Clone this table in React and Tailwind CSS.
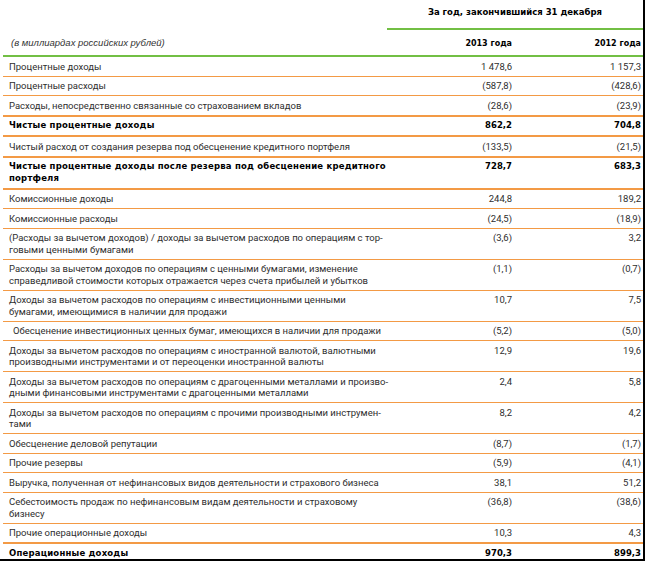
import React from "react";

const rows = [
  { l: ["Процентные доходы"], a: "1 478,6", b: "1 157,3" },
  { l: ["Процентные расходы"], a: "(587,8)", b: "(428,6)" },
  { l: ["Расходы, непосредственно связанные со страхованием вкладов"], a: "(28,6)", b: "(23,9)", t: true },
  { l: ["Чистые процентные доходы"], a: "862,2", b: "704,8", bold: true, t: true },
  { l: ["Чистый расход от создания резерва под обесценение кредитного портфеля"], a: "(133,5)", b: "(21,5)", t: true },
  { l: ["Чистые процентные доходы после резерва под обесценение кредитного", "портфеля"], a: "728,7", b: "683,3", bold: true, t: true },
  { l: ["Комиссионные доходы"], a: "244,8", b: "189,2" },
  { l: ["Комиссионные расходы"], a: "(24,5)", b: "(18,9)" },
  { l: ["(Расходы за вычетом доходов) / доходы за вычетом расходов по операциям с тор-", "говыми ценными бумагами"], a: "(3,6)", b: "3,2" },
  { l: ["Расходы за вычетом доходов по операциям с ценными бумагами, изменение", "справедливой стоимости которых отражается через счета прибылей и убытков"], a: "(1,1)", b: "(0,7)" },
  { l: ["Доходы за вычетом расходов по операциям с инвестиционными ценными", "бумагами, имеющимися в наличии для продажи"], a: "10,7", b: "7,5" },
  { l: ["Обесценение инвестиционных ценных бумаг, имеющихся в наличии для продажи"], a: "(5,2)", b: "(5,0)", ind: true },
  { l: ["Доходы за вычетом расходов по операциям с иностранной валютой, валютными", "производными инструментами и от переоценки иностранной валюты"], a: "12,9", b: "19,6" },
  { l: ["Доходы за вычетом расходов по операциям с драгоценными металлами и произво-", "дными финансовыми инструментами с драгоценными металлами"], a: "2,4", b: "5,8" },
  { l: ["Доходы за вычетом расходов по операциям с прочими производными инструмен-", "тами"], a: "8,2", b: "4,2" },
  { l: ["Обесценение деловой репутации"], a: "(8,7)", b: "(1,7)" },
  { l: ["Прочие резервы"], a: "(5,9)", b: "(4,1)" },
  { l: ["Выручка, полученная от нефинансовых видов деятельности и страхового бизнеса"], a: "38,1", b: "51,2" },
  { l: ["Себестоимость продаж по нефинансовым видам деятельности и страховому", "бизнесу"], a: "(36,8)", b: "(38,6)" },
  { l: ["Прочие операционные доходы"], a: "10,3", b: "4,3", t: true },
  { l: ["Операционные доходы"], a: "970,3", b: "899,3", bold: true, last: true },
];

export default function App() {
  return (
    <div className="w-[645px] h-[561px] bg-white border-r-2 border-b-2 border-black overflow-hidden text-[#2e2e2e] font-['Roboto',sans-serif]">
      <div className="flex justify-end h-[30px]">
        <div className="w-[256px] border-b-2 border-[#72bf44] flex items-center justify-center pb-[4px] font-['DejaVu_Sans',sans-serif] font-bold text-[8.5px] text-black">
          За год, закончившийся 31 декабря
        </div>
      </div>
      <div className="ml-[3px] flex items-center h-[27px] border-b-2 border-[#72bf44] pt-[2px]">
        <div className="flex-1 pl-[8px] italic text-[9.5px] font-['Liberation_Sans',sans-serif] text-[#333]">
          (в миллиардах российских рублей)
        </div>
        <div className="w-[100px] text-right font-['DejaVu_Sans',sans-serif] font-bold text-[8px] text-black">2013 года</div>
        <div className="w-[131px] text-right pr-[2px] font-['DejaVu_Sans',sans-serif] font-bold text-[8px] text-black">2012 года</div>
      </div>
      <div className="ml-[3px]">
        {rows.map((r, i) => (
          <div
            key={i}
            className={
              "flex items-center py-[3.5px] leading-[11.5px] " +
              (r.last ? "" : r.t ? "border-b-2 border-[#f39a45] " : "border-b border-[#f39a45] ")
            }
          >
            <div
              className={
                "flex-1 " +
                (r.ind ? "pl-[10px] " : "pl-[6px] ") +
                (r.bold
                  ? "font-['DejaVu_Sans',sans-serif] font-bold text-[8.5px] tracking-[0.2px] text-black"
                  : "text-[9.5px]")
              }
            >
              {r.l.map((x, j) => (
                <div key={j}>{x}</div>
              ))}
            </div>
            <div
              className={
                "w-[100px] text-right self-start " +
                (r.bold ? "font-['DejaVu_Sans',sans-serif] font-bold text-[8.5px] text-black" : "text-[9.5px]")
              }
            >
              {r.a}
            </div>
            <div
              className={
                "w-[131px] text-right pr-[2px] self-start " +
                (r.bold ? "font-['DejaVu_Sans',sans-serif] font-bold text-[8.5px] text-black" : "text-[9.5px]")
              }
            >
              {r.b}
            </div>
          </div>
        ))}
      </div>
    </div>
  );
}
